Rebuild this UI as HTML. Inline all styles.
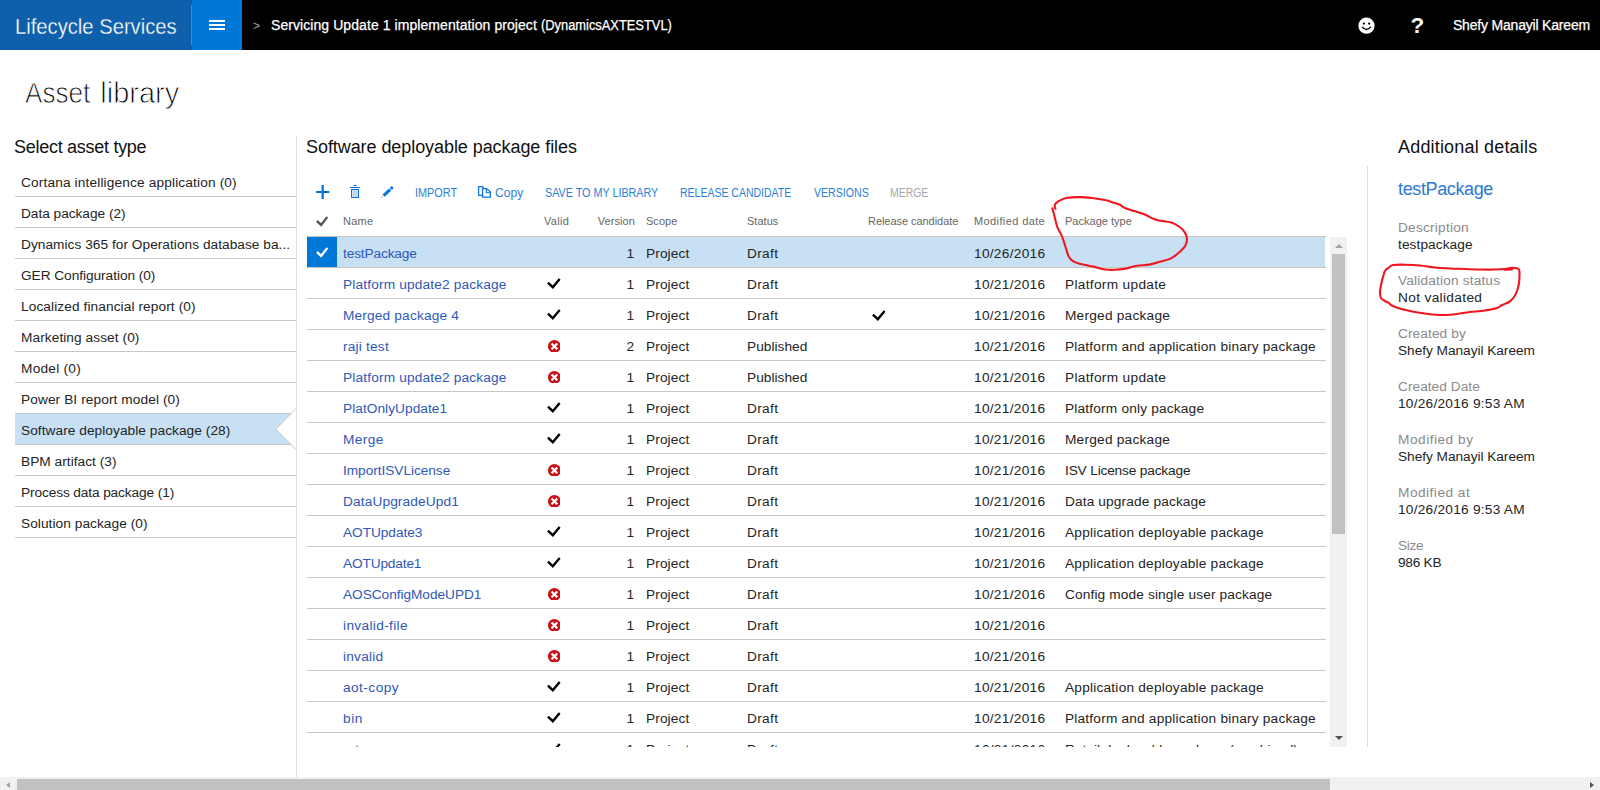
<!DOCTYPE html>
<html lang="en">
<head>
<meta charset="utf-8">
<title>Asset library - Lifecycle Services</title>
<style>
*{box-sizing:border-box;margin:0;padding:0}
html,body{width:1600px;height:790px;overflow:hidden;background:#fff}
body{font-family:"Liberation Sans",Arial,sans-serif;font-size:13.7px;color:#242424;position:relative}
a{color:inherit;text-decoration:none}
/* ---------- top bar ---------- */
#top{position:absolute;left:0;top:0;width:1600px;height:50px;background:#000;color:#fff}
#brand{position:absolute;left:0;top:0;width:192px;height:50px;background:#0f60aa;font-size:22px;line-height:50px;padding-left:15px;white-space:nowrap}
#brand span{display:inline-block;position:relative;top:1px;-webkit-text-stroke:.3px #0f60aa}
#bsep{position:absolute;left:191px;top:5px;width:1px;height:40px;background:#4a86c2}
#burger{position:absolute;left:192px;top:0;width:50px;height:50px;background:#0078d7}
#burger i{position:absolute;left:17px;width:16px;height:2px;background:#fff}
#crumb,#user{-webkit-text-stroke:.25px #fff}
#crumb{position:absolute;left:253px;top:0;height:50px;line-height:50px;font-size:14px;white-space:nowrap}
#crumb .gt{-webkit-text-stroke:0;color:#aaa;font-size:12px;display:inline-block;width:18px;position:relative;top:0px}
#user{position:absolute;right:10px;top:0;line-height:50px;font-size:14px;white-space:nowrap}
#smile{position:absolute;left:1358px;top:17px}
#help{position:absolute;left:1410.4px;top:0;line-height:51px;font-size:22.5px;font-weight:bold}
/* ---------- page title ---------- */
h1{position:absolute;left:25px;top:74px;font-size:29px;font-weight:normal;line-height:38px;color:#000;-webkit-text-stroke:.9px #fff;word-spacing:1.8px;white-space:nowrap}
h2{font-size:18px;font-weight:normal;line-height:22px;color:#111;white-space:nowrap;position:absolute;top:136px}
/* ---------- left panel ---------- */
#left{position:absolute;left:15px;top:166px;width:281px}
#left ul{list-style:none}
#left li{height:31px;line-height:34px;border-bottom:1px solid #c8c8c8;padding-left:6px;white-space:nowrap;position:relative}
#left li.on{background:#c7e0f4}
#left li.on .notch{position:absolute;right:-1px;top:-7px}
#vl1{position:absolute;left:296px;top:136px;width:1px;height:641px;background:#dedede}
/* ---------- main grid ---------- */
#tools{position:absolute;left:307px;top:180px;height:24px;font-size:12px;color:#2c80d8;white-space:nowrap}
#tools>span{position:absolute;top:0;line-height:26px}
#tools svg{position:absolute}
#tools .dis{color:#a6a6a6}
#tools .cp{font-size:12px}
#ghead{position:absolute;left:307px;top:206px;width:1019px;height:31px;border-bottom:1px solid #c8c8c8;font-size:11px;color:#666}
#ghead>span{position:absolute;top:0;line-height:30px;white-space:nowrap}
#ghead svg{position:absolute;left:9px;top:10px;color:#595959}
#grid{position:absolute;left:307px;top:237px;width:1019px;height:510px;overflow:hidden}
.row{position:relative;height:31px;border-bottom:1px solid #c8c8c8;line-height:33px;white-space:nowrap}
.row.sel{background:#c7e0f4;border-bottom-color:#c8c8c8}
.row.sel:after{content:"";position:absolute;right:0;top:0;width:1px;height:30px;background:#fff}
.c{position:absolute;top:0;height:30px}
.c-sel{left:0;width:30px}
.row.sel .c-sel{background:#0078d7;color:#fff}
.c-sel svg{position:absolute;left:9px;top:10px}
.c-name{left:36px;color:#2f58b8}
.c-valid{left:237px;color:#000}
.c-valid .ck{position:absolute;left:3.2px;top:10.2px}
.c-valid .bd{position:absolute;left:3.6px;top:9.6px}
.c-ver{left:277px;width:50px;text-align:right}
.c-scope{left:339px}
.c-status{left:440px}
.c-rc{left:561px;color:#000}
.c-rc .ck{position:absolute;left:3.5px;top:11.2px}
.c-date{left:667px}
.c-type{left:758px}
/* vertical scrollbar of grid */
#vsb{position:absolute;left:1330px;top:237px;width:17px;height:510px;background:#f1f1f1}
#vsb b{position:absolute;left:2px;top:17px;width:13px;height:280px;background:#c1c1c1}
#vsb i{position:absolute;left:4.5px;border-style:solid;border-color:transparent}
#vsb i.up{top:6.5px;border-width:0 4px 4.5px 4px;border-bottom-color:#a3a3a3}
#vsb i.dn{top:498.8px;border-width:4.5px 4px 0 4px;border-top-color:#505050}
/* ---------- right panel ---------- */
#vl2{position:absolute;left:1367px;top:166px;width:1px;height:581px;background:#dedede}
#det{position:absolute;left:1398px;top:177px;width:200px}
#det h3{font-size:18px;font-weight:normal;color:#2b7ad0;line-height:24px;margin-bottom:18px}
#det dt{color:#8a8a8a;line-height:17px;font-size:13.7px}
#det dd{color:#242424;line-height:17px;font-size:13.7px;margin-bottom:19px}
/* ---------- page scrollbar ---------- */
#hsb{position:absolute;left:0;top:777px;width:1600px;height:13px;background:#f1f1f1}
#hsb b{position:absolute;left:17px;top:2px;width:1313px;height:11px;background:#c1c1c1}
#hsb i{position:absolute;top:4.8px;border-style:solid;border-color:transparent}
#hsb i.l{left:5.9px;border-width:3.6px 4.3px 3.6px 0;border-right-color:#a3a3a3}
#hsb i.r{right:5.9px;border-width:3.6px 0 3.6px 4.3px;border-left-color:#505050}
/* annotation */
#ann{position:absolute;left:0;top:0;pointer-events:none}
</style>
</head>
<body>
<div id="top">
  <div id="brand"><span><span style="display:inline-block;transform-origin:0 50%;transform:scaleX(0.918);margin-right:-14.5px">Lifecycle Services</span></span></div>
  <div id="bsep"></div>
  <div id="burger"><i style="top:20px"></i><i style="top:24px"></i><i style="top:28px"></i></div>
  <div id="crumb"><span class="gt">&gt;</span><span><span style="letter-spacing:0.07px">Servicing Update 1 implementation project</span></span> <span><span style="display:inline-block;transform-origin:0 50%;transform:scaleX(0.919);margin-right:-11.6px">(DynamicsAXTESTVL)</span></span></div>
  <svg id="smile" width="17" height="17" viewBox="0 0 17 17"><circle cx="8.5" cy="8.7" r="8.1" fill="#fff"/><circle cx="5.9" cy="6.6" r="1.15" fill="#000"/><circle cx="11.1" cy="6.6" r="1.15" fill="#000"/><path d="M4.2 9.9 Q8.5 15.2 12.8 9.9" fill="none" stroke="#000" stroke-width="1.5"/></svg>
  <div id="help">?</div>
  <div id="user"><span style="letter-spacing:-0.19px">Shefy Manayil Kareem</span></div>
</div>

<h1><span><span style="display:inline-block;transform-origin:0 50%;transform:scaleX(0.900);margin-right:-7.2px">Asset</span></span> <span><span style="letter-spacing:0.02px">library</span></span></h1>

<h2 style="left:14px"><span style="letter-spacing:-0.28px">Select asset type</span></h2>
<div id="left"><ul>
<li><span style="letter-spacing:0.14px">Cortana intelligence application (0)</span></li>
<li><span style="letter-spacing:-0.03px">Data package (2)</span></li>
<li><span style="letter-spacing:0.03px">Dynamics 365 for Operations database ba...</span></li>
<li><span style="letter-spacing:-0.05px">GER Configuration (0)</span></li>
<li><span style="letter-spacing:0.09px">Localized financial report (0)</span></li>
<li><span style="letter-spacing:0.07px">Marketing asset (0)</span></li>
<li><span style="letter-spacing:0.24px">Model (0)</span></li>
<li><span style="letter-spacing:0.09px">Power BI report model (0)</span></li>
<li class="on"><span><span style="letter-spacing:0.05px">Software deployable package (28)</span></span><svg class="notch" width="22" height="44" viewBox="0 0 22 44"><path d="M22 0.5 L1 22 L22 43.5 Z" fill="#fff" stroke="#c8c8c8" stroke-width="1"/></svg></li>
<li><span style="letter-spacing:0.03px">BPM artifact (3)</span></li>
<li><span style="letter-spacing:-0.12px">Process data package (1)</span></li>
<li><span style="letter-spacing:0.05px">Solution package (0)</span></li>
</ul></div>
<div id="vl1"></div>

<h2 style="left:306px"><span style="letter-spacing:-0.07px">Software deployable package files</span></h2>
<div id="tools">
  <svg style="left:9px;top:5px" width="14" height="14" viewBox="0 0 14 14"><path d="M0 7H13.4" stroke="#0a72d6" stroke-width="2" fill="none"/><path d="M6.65 0V14" stroke="#0a72d6" stroke-width="2.3" fill="none"/></svg>
  <svg style="left:43px;top:4px" width="10" height="14" viewBox="0 0 10 14"><ellipse cx="5.1" cy="1.45" rx="1.7" ry="0.6" fill="#0a72d6"/><rect x="0" y="3" width="10" height="1" fill="#0a72d6"/><rect x="1.5" y="5.5" width="7" height="8" fill="#d7e2f8" stroke="#0a72d6" stroke-width="1"/><path d="M3.5 6V13M5 6V13M6.5 6V13" stroke="#a9cbf2" stroke-width=".7" fill="none"/></svg>
  <svg style="left:74px;top:6px" width="12.6" height="12.4" viewBox="0 0 12.6 12.4"><path d="M0.1 11.9 L0.9 10.1 L2 11.2 Z" fill="#7d9be6"/><path d="M2.6 9.6 L9.1 3.7" stroke="#0a72d6" stroke-width="3.1" fill="none"/><circle cx="10.7" cy="1.9" r="1.55" fill="#0a72d6"/></svg>
  <span style="left:108px"><span style="display:inline-block;transform-origin:0 50%;transform:scaleX(0.906);margin-right:-4.4px">IMPORT</span></span>
  <svg style="left:171px;top:6px" width="13.2" height="12" viewBox="0 0 13.2 12"><path d="M5.9 2.3 L4.5 0.65 H0.65 V9.45 H4" fill="none" stroke="#0a72d6" stroke-width="1.2"/><path d="M4.55 2.7 H8.6 L12.35 5.7 V11.25 H4.55 Z" fill="#fff" stroke="#0a72d6" stroke-width="1.25" stroke-linejoin="round"/><path d="M8.3 3 V6.7 H12" fill="none" stroke="#0a72d6" stroke-width="1.1"/></svg>
  <span style="left:188px" class="cp"><span style="letter-spacing:0.07px">Copy</span></span>
  <span style="left:238px"><span style="display:inline-block;transform-origin:0 50%;transform:scaleX(0.897);margin-right:-13.0px">SAVE TO MY LIBRARY</span></span>
  <span style="left:373px"><span style="display:inline-block;transform-origin:0 50%;transform:scaleX(0.875);margin-right:-15.9px">RELEASE CANDIDATE</span></span>
  <span style="left:507px"><span style="display:inline-block;transform-origin:0 50%;transform:scaleX(0.882);margin-right:-7.3px">VERSIONS</span></span>
  <span style="left:583px" class="dis"><span style="display:inline-block;transform-origin:0 50%;transform:scaleX(0.870);margin-right:-5.7px">MERGE</span></span>
</div>
<div id="ghead">
  <svg class="ck" viewBox="0 0 12.4 10.6" width="12.4" height="10.6"><path d="M0.9 5 L5.1 8.9 L11.4 0.9" fill="none" stroke="currentColor" stroke-width="2.4"/></svg>
  <span style="left:36px"><span style="letter-spacing:0.24px">Name</span></span><span style="left:237px"><span style="letter-spacing:0.33px">Valid</span></span><span style="left:278px;width:50px;text-align:right"><span style="letter-spacing:0.09px">Version</span></span><span style="left:339px"><span style="letter-spacing:0.02px">Scope</span></span><span style="left:440px"><span style="letter-spacing:0.02px">Status</span></span><span style="left:561px"><span style="letter-spacing:-0.05px">Release candidate</span></span><span style="left:667px"><span style="letter-spacing:0.39px">Modified date</span></span><span style="left:758px"><span style="letter-spacing:0.02px">Package type</span></span>
</div>
<div id="grid">
<div class="row sel"><span class="c c-sel"><svg class="ck" viewBox="0 0 12.4 10.6" width="12.4" height="10.6"><path d="M0.9 5 L5.1 8.9 L11.4 0.9" fill="none" stroke="currentColor" stroke-width="2.4"/></svg></span><span class="c c-name"><a><span style="letter-spacing:-0.14px">testPackage</span></a></span><span class="c c-valid"></span><span class="c c-ver">1</span><span class="c c-scope"><span style="letter-spacing:0.10px">Project</span></span><span class="c c-status"><span style="letter-spacing:0.33px">Draft</span></span><span class="c c-rc"></span><span class="c c-date"><span style="letter-spacing:0.28px">10/26/2016</span></span><span class="c c-type"></span></div>
<div class="row"><span class="c c-sel"></span><span class="c c-name"><a><span style="letter-spacing:0.16px">Platform update2 package</span></a></span><span class="c c-valid"><svg class="ck" viewBox="0 0 13.7 11" width="13.7" height="11"><path d="M0.9 4.7 L5.8 9.2 L12.7 0.9" fill="none" stroke="currentColor" stroke-width="2.4"/></svg></span><span class="c c-ver">1</span><span class="c c-scope"><span style="letter-spacing:0.10px">Project</span></span><span class="c c-status"><span style="letter-spacing:0.33px">Draft</span></span><span class="c c-rc"></span><span class="c c-date"><span style="letter-spacing:0.28px">10/21/2016</span></span><span class="c c-type"><span style="letter-spacing:0.31px">Platform update</span></span></div>
<div class="row"><span class="c c-sel"></span><span class="c c-name"><a><span style="letter-spacing:0.16px">Merged package 4</span></a></span><span class="c c-valid"><svg class="ck" viewBox="0 0 13.7 11" width="13.7" height="11"><path d="M0.9 4.7 L5.8 9.2 L12.7 0.9" fill="none" stroke="currentColor" stroke-width="2.4"/></svg></span><span class="c c-ver">1</span><span class="c c-scope"><span style="letter-spacing:0.10px">Project</span></span><span class="c c-status"><span style="letter-spacing:0.33px">Draft</span></span><span class="c c-rc"><svg class="ck" viewBox="0 0 13.7 11" width="13.7" height="11"><path d="M0.9 4.7 L5.8 9.2 L12.7 0.9" fill="none" stroke="currentColor" stroke-width="2.4"/></svg></span><span class="c c-date"><span style="letter-spacing:0.28px">10/21/2016</span></span><span class="c c-type"><span style="letter-spacing:0.22px">Merged package</span></span></div>
<div class="row"><span class="c c-sel"></span><span class="c c-name"><a><span style="letter-spacing:0.20px">raji test</span></a></span><span class="c c-valid"><svg class="bd" viewBox="0 0 13 13" width="12.8" height="12.8"><circle cx="6.5" cy="6.5" r="6.5" fill="#cb1018"/><path d="M3.6 3.6 L9.4 9.4 M9.4 3.6 L3.6 9.4" stroke="#fff" stroke-width="2.3" fill="none"/></svg></span><span class="c c-ver">2</span><span class="c c-scope"><span style="letter-spacing:0.10px">Project</span></span><span class="c c-status"><span style="letter-spacing:0.02px">Published</span></span><span class="c c-rc"></span><span class="c c-date"><span style="letter-spacing:0.28px">10/21/2016</span></span><span class="c c-type"><span style="letter-spacing:0.19px">Platform and application binary package</span></span></div>
<div class="row"><span class="c c-sel"></span><span class="c c-name"><a><span style="letter-spacing:0.16px">Platform update2 package</span></a></span><span class="c c-valid"><svg class="bd" viewBox="0 0 13 13" width="12.8" height="12.8"><circle cx="6.5" cy="6.5" r="6.5" fill="#cb1018"/><path d="M3.6 3.6 L9.4 9.4 M9.4 3.6 L3.6 9.4" stroke="#fff" stroke-width="2.3" fill="none"/></svg></span><span class="c c-ver">1</span><span class="c c-scope"><span style="letter-spacing:0.10px">Project</span></span><span class="c c-status"><span style="letter-spacing:0.02px">Published</span></span><span class="c c-rc"></span><span class="c c-date"><span style="letter-spacing:0.28px">10/21/2016</span></span><span class="c c-type"><span style="letter-spacing:0.31px">Platform update</span></span></div>
<div class="row"><span class="c c-sel"></span><span class="c c-name"><a><span style="letter-spacing:0.04px">PlatOnlyUpdate1</span></a></span><span class="c c-valid"><svg class="ck" viewBox="0 0 13.7 11" width="13.7" height="11"><path d="M0.9 4.7 L5.8 9.2 L12.7 0.9" fill="none" stroke="currentColor" stroke-width="2.4"/></svg></span><span class="c c-ver">1</span><span class="c c-scope"><span style="letter-spacing:0.10px">Project</span></span><span class="c c-status"><span style="letter-spacing:0.33px">Draft</span></span><span class="c c-rc"></span><span class="c c-date"><span style="letter-spacing:0.28px">10/21/2016</span></span><span class="c c-type"><span style="letter-spacing:0.18px">Platform only package</span></span></div>
<div class="row"><span class="c c-sel"></span><span class="c c-name"><a><span style="letter-spacing:0.40px">Merge</span></a></span><span class="c c-valid"><svg class="ck" viewBox="0 0 13.7 11" width="13.7" height="11"><path d="M0.9 4.7 L5.8 9.2 L12.7 0.9" fill="none" stroke="currentColor" stroke-width="2.4"/></svg></span><span class="c c-ver">1</span><span class="c c-scope"><span style="letter-spacing:0.10px">Project</span></span><span class="c c-status"><span style="letter-spacing:0.33px">Draft</span></span><span class="c c-rc"></span><span class="c c-date"><span style="letter-spacing:0.28px">10/21/2016</span></span><span class="c c-type"><span style="letter-spacing:0.22px">Merged package</span></span></div>
<div class="row"><span class="c c-sel"></span><span class="c c-name"><a><span style="letter-spacing:-0.05px">ImportISVLicense</span></a></span><span class="c c-valid"><svg class="bd" viewBox="0 0 13 13" width="12.8" height="12.8"><circle cx="6.5" cy="6.5" r="6.5" fill="#cb1018"/><path d="M3.6 3.6 L9.4 9.4 M9.4 3.6 L3.6 9.4" stroke="#fff" stroke-width="2.3" fill="none"/></svg></span><span class="c c-ver">1</span><span class="c c-scope"><span style="letter-spacing:0.10px">Project</span></span><span class="c c-status"><span style="letter-spacing:0.33px">Draft</span></span><span class="c c-rc"></span><span class="c c-date"><span style="letter-spacing:0.28px">10/21/2016</span></span><span class="c c-type"><span style="letter-spacing:-0.17px">ISV License package</span></span></div>
<div class="row"><span class="c c-sel"></span><span class="c c-name"><a><span style="letter-spacing:0.12px">DataUpgradeUpd1</span></a></span><span class="c c-valid"><svg class="bd" viewBox="0 0 13 13" width="12.8" height="12.8"><circle cx="6.5" cy="6.5" r="6.5" fill="#cb1018"/><path d="M3.6 3.6 L9.4 9.4 M9.4 3.6 L3.6 9.4" stroke="#fff" stroke-width="2.3" fill="none"/></svg></span><span class="c c-ver">1</span><span class="c c-scope"><span style="letter-spacing:0.10px">Project</span></span><span class="c c-status"><span style="letter-spacing:0.33px">Draft</span></span><span class="c c-rc"></span><span class="c c-date"><span style="letter-spacing:0.28px">10/21/2016</span></span><span class="c c-type"><span style="letter-spacing:0.13px">Data upgrade package</span></span></div>
<div class="row"><span class="c c-sel"></span><span class="c c-name"><a><span style="letter-spacing:-0.06px">AOTUpdate3</span></a></span><span class="c c-valid"><svg class="ck" viewBox="0 0 13.7 11" width="13.7" height="11"><path d="M0.9 4.7 L5.8 9.2 L12.7 0.9" fill="none" stroke="currentColor" stroke-width="2.4"/></svg></span><span class="c c-ver">1</span><span class="c c-scope"><span style="letter-spacing:0.10px">Project</span></span><span class="c c-status"><span style="letter-spacing:0.33px">Draft</span></span><span class="c c-rc"></span><span class="c c-date"><span style="letter-spacing:0.28px">10/21/2016</span></span><span class="c c-type"><span style="letter-spacing:0.21px">Application deployable package</span></span></div>
<div class="row"><span class="c c-sel"></span><span class="c c-name"><a><span style="letter-spacing:-0.16px">AOTUpdate1</span></a></span><span class="c c-valid"><svg class="ck" viewBox="0 0 13.7 11" width="13.7" height="11"><path d="M0.9 4.7 L5.8 9.2 L12.7 0.9" fill="none" stroke="currentColor" stroke-width="2.4"/></svg></span><span class="c c-ver">1</span><span class="c c-scope"><span style="letter-spacing:0.10px">Project</span></span><span class="c c-status"><span style="letter-spacing:0.33px">Draft</span></span><span class="c c-rc"></span><span class="c c-date"><span style="letter-spacing:0.28px">10/21/2016</span></span><span class="c c-type"><span style="letter-spacing:0.21px">Application deployable package</span></span></div>
<div class="row"><span class="c c-sel"></span><span class="c c-name"><a><span style="letter-spacing:-0.05px">AOSConfigModeUPD1</span></a></span><span class="c c-valid"><svg class="bd" viewBox="0 0 13 13" width="12.8" height="12.8"><circle cx="6.5" cy="6.5" r="6.5" fill="#cb1018"/><path d="M3.6 3.6 L9.4 9.4 M9.4 3.6 L3.6 9.4" stroke="#fff" stroke-width="2.3" fill="none"/></svg></span><span class="c c-ver">1</span><span class="c c-scope"><span style="letter-spacing:0.10px">Project</span></span><span class="c c-status"><span style="letter-spacing:0.33px">Draft</span></span><span class="c c-rc"></span><span class="c c-date"><span style="letter-spacing:0.28px">10/21/2016</span></span><span class="c c-type"><span style="letter-spacing:0.13px">Config mode single user package</span></span></div>
<div class="row"><span class="c c-sel"></span><span class="c c-name"><a><span style="letter-spacing:0.34px">invalid-file</span></a></span><span class="c c-valid"><svg class="bd" viewBox="0 0 13 13" width="12.8" height="12.8"><circle cx="6.5" cy="6.5" r="6.5" fill="#cb1018"/><path d="M3.6 3.6 L9.4 9.4 M9.4 3.6 L3.6 9.4" stroke="#fff" stroke-width="2.3" fill="none"/></svg></span><span class="c c-ver">1</span><span class="c c-scope"><span style="letter-spacing:0.10px">Project</span></span><span class="c c-status"><span style="letter-spacing:0.33px">Draft</span></span><span class="c c-rc"></span><span class="c c-date"><span style="letter-spacing:0.28px">10/21/2016</span></span><span class="c c-type"></span></div>
<div class="row"><span class="c c-sel"></span><span class="c c-name"><a><span style="letter-spacing:0.21px">invalid</span></a></span><span class="c c-valid"><svg class="bd" viewBox="0 0 13 13" width="12.8" height="12.8"><circle cx="6.5" cy="6.5" r="6.5" fill="#cb1018"/><path d="M3.6 3.6 L9.4 9.4 M9.4 3.6 L3.6 9.4" stroke="#fff" stroke-width="2.3" fill="none"/></svg></span><span class="c c-ver">1</span><span class="c c-scope"><span style="letter-spacing:0.10px">Project</span></span><span class="c c-status"><span style="letter-spacing:0.33px">Draft</span></span><span class="c c-rc"></span><span class="c c-date"><span style="letter-spacing:0.28px">10/21/2016</span></span><span class="c c-type"></span></div>
<div class="row"><span class="c c-sel"></span><span class="c c-name"><a><span style="letter-spacing:0.44px">aot-copy</span></a></span><span class="c c-valid"><svg class="ck" viewBox="0 0 13.7 11" width="13.7" height="11"><path d="M0.9 4.7 L5.8 9.2 L12.7 0.9" fill="none" stroke="currentColor" stroke-width="2.4"/></svg></span><span class="c c-ver">1</span><span class="c c-scope"><span style="letter-spacing:0.10px">Project</span></span><span class="c c-status"><span style="letter-spacing:0.33px">Draft</span></span><span class="c c-rc"></span><span class="c c-date"><span style="letter-spacing:0.28px">10/21/2016</span></span><span class="c c-type"><span style="letter-spacing:0.21px">Application deployable package</span></span></div>
<div class="row"><span class="c c-sel"></span><span class="c c-name"><a><span style="letter-spacing:0.61px">bin</span></a></span><span class="c c-valid"><svg class="ck" viewBox="0 0 13.7 11" width="13.7" height="11"><path d="M0.9 4.7 L5.8 9.2 L12.7 0.9" fill="none" stroke="currentColor" stroke-width="2.4"/></svg></span><span class="c c-ver">1</span><span class="c c-scope"><span style="letter-spacing:0.10px">Project</span></span><span class="c c-status"><span style="letter-spacing:0.33px">Draft</span></span><span class="c c-rc"></span><span class="c c-date"><span style="letter-spacing:0.28px">10/21/2016</span></span><span class="c c-type"><span style="letter-spacing:0.19px">Platform and application binary package</span></span></div>
<div class="row"><span class="c c-sel"></span><span class="c c-name"><a>ret</a></span><span class="c c-valid"><svg class="ck" viewBox="0 0 13.7 11" width="13.7" height="11"><path d="M0.9 4.7 L5.8 9.2 L12.7 0.9" fill="none" stroke="currentColor" stroke-width="2.4"/></svg></span><span class="c c-ver">1</span><span class="c c-scope"><span style="letter-spacing:0.10px">Project</span></span><span class="c c-status"><span style="letter-spacing:0.33px">Draft</span></span><span class="c c-rc"></span><span class="c c-date"><span style="letter-spacing:0.28px">10/21/2016</span></span><span class="c c-type">Retail deployable package (combined)</span></div>
</div>
<div id="vsb"><i class="up"></i><b></b><i class="dn"></i></div>

<div id="vl2"></div>
<h2 style="left:1398px"><span style="letter-spacing:0.18px">Additional details</span></h2>
<div id="det">
  <h3><span style="letter-spacing:-0.37px">testPackage</span></h3>
  <dl>
    <dt><span style="letter-spacing:0.22px">Description</span></dt><dd><span style="letter-spacing:0.08px">testpackage</span></dd>
    <dt><span style="letter-spacing:0.16px">Validation status</span></dt><dd><span style="letter-spacing:0.34px">Not validated</span></dd>
    <dt><span style="letter-spacing:0.09px">Created by</span></dt><dd><span style="letter-spacing:-0.04px">Shefy Manayil Kareem</span></dd>
    <dt><span style="letter-spacing:0.03px">Created Date</span></dt><dd><span style="letter-spacing:0.24px">10/26/2016 9:53 AM</span></dd>
    <dt><span style="letter-spacing:0.50px">Modified by</span></dt><dd><span style="letter-spacing:-0.04px">Shefy Manayil Kareem</span></dd>
    <dt><span style="letter-spacing:0.48px">Modified at</span></dt><dd><span style="letter-spacing:0.24px">10/26/2016 9:53 AM</span></dd>
    <dt><span style="letter-spacing:-0.34px">Size</span></dt><dd><span style="letter-spacing:-0.27px">986 KB</span></dd>
  </dl>
</div>

<div id="hsb"><i class="l"></i><b></b><i class="r"></i></div>

<svg id="ann" width="1600" height="790" viewBox="0 0 1600 790" fill="none" stroke="#f0161e" stroke-width="2.1" stroke-linecap="round" stroke-linejoin="round">
  <path d="M1052.3 208.2C1052.7 209.8 1054.0 214.3 1054.8 217.4C1055.6 220.4 1056.0 223.4 1057.1 226.5C1058.2 229.5 1060.2 232.2 1061.7 235.6C1063.1 239.0 1064.5 243.6 1065.6 247.0C1066.8 250.4 1067.3 253.7 1068.5 256.1C1069.7 258.5 1071.0 259.9 1073.0 261.2C1075.1 262.6 1077.8 263.2 1081.0 264.1C1084.3 264.9 1088.6 265.5 1092.4 266.4C1096.2 267.2 1100.2 268.6 1103.8 269.2C1107.4 269.8 1110.5 269.9 1114.1 269.8C1117.7 269.7 1121.7 269.3 1125.5 268.6C1129.3 268.0 1132.9 266.4 1136.9 265.8C1140.9 265.1 1145.6 265.3 1149.4 264.6C1153.2 264.0 1156.0 262.8 1159.7 261.8C1163.3 260.8 1167.6 260.1 1171.1 258.4C1174.5 256.7 1177.8 253.6 1180.2 251.5C1182.5 249.4 1184.2 247.9 1185.3 245.8C1186.4 243.8 1187.1 241.3 1187.0 239.0C1186.9 236.7 1186.1 234.3 1184.7 232.2C1183.4 230.1 1181.3 228.1 1179.0 226.5C1176.8 224.9 1174.1 223.4 1171.1 222.5C1168.0 221.5 1163.6 221.3 1160.8 220.8C1157.9 220.2 1156.6 220.1 1154.0 219.1C1151.3 218.0 1148.1 215.8 1144.8 214.5C1141.6 213.2 1137.8 212.1 1134.6 211.1C1131.4 210.0 1127.9 209.3 1125.5 208.2C1123.0 207.2 1121.9 205.8 1119.8 204.8C1117.7 203.9 1115.2 203.3 1112.9 202.5C1110.7 201.8 1109.3 201.0 1106.1 200.3C1102.9 199.5 1097.9 198.7 1093.6 198.2C1089.2 197.7 1084.4 197.1 1079.9 197.1C1075.3 197.0 1069.8 197.3 1066.2 198.0C1062.6 198.7 1060.1 200.3 1058.2 201.4C1056.3 202.5 1055.3 203.6 1054.8 204.8C1054.3 206.0 1055.3 208.1 1055.4 208.8"/>
  <path d="M1393.0 265.0C1395.7 264.5 1400.5 264.6 1405.0 264.7C1409.5 264.8 1415.0 265.0 1420.0 265.5C1425.0 266.0 1430.0 267.0 1435.0 267.5C1440.0 268.0 1445.0 268.2 1450.0 268.5C1455.0 268.8 1460.0 268.8 1465.0 269.0C1470.0 269.2 1475.0 269.4 1480.0 269.5C1485.0 269.6 1490.8 269.6 1495.0 269.5C1499.2 269.4 1502.5 269.2 1505.0 269.0C1507.5 268.8 1508.3 268.2 1510.0 268.0C1511.7 267.8 1513.5 267.8 1515.0 268.0C1516.5 268.2 1518.2 268.3 1519.0 269.5C1519.8 270.7 1519.5 272.8 1519.5 275.0C1519.5 277.2 1519.4 280.3 1519.0 283.0C1518.6 285.7 1517.8 288.7 1517.0 291.0C1516.2 293.3 1515.3 295.2 1514.0 297.0C1512.7 298.8 1511.0 300.7 1509.0 302.0C1507.0 303.3 1504.0 304.0 1502.0 305.0C1500.0 306.0 1499.8 307.1 1497.0 308.0C1494.2 308.9 1489.5 309.8 1485.0 310.5C1480.5 311.2 1474.2 311.5 1470.0 312.0C1465.8 312.5 1463.3 313.0 1460.0 313.5C1456.7 314.0 1453.3 314.6 1450.0 314.8C1446.7 315.1 1443.3 315.1 1440.0 315.0C1436.7 314.9 1433.7 314.6 1430.0 314.2C1426.3 313.8 1421.7 313.1 1418.0 312.5C1414.3 311.9 1411.3 311.2 1408.0 310.5C1404.7 309.8 1400.8 308.9 1398.0 308.0C1395.2 307.1 1392.5 305.8 1391.0 305.0C1389.5 304.2 1390.2 303.8 1389.0 303.0C1387.8 302.2 1385.3 301.3 1384.0 300.5C1382.7 299.7 1381.7 299.2 1381.0 298.0C1380.3 296.8 1380.0 295.2 1380.0 293.0C1380.0 290.8 1380.5 287.7 1381.0 285.0C1381.5 282.3 1382.3 279.3 1383.0 277.0C1383.7 274.7 1384.0 272.6 1385.0 271.0C1386.0 269.4 1387.7 268.5 1389.0 267.5C1390.3 266.5 1390.3 265.5 1393.0 265.0Z"/>
  <path d="M1505 269.6 L1512 269.4" stroke-width="2.4"/>
</svg>
</body>
</html>
